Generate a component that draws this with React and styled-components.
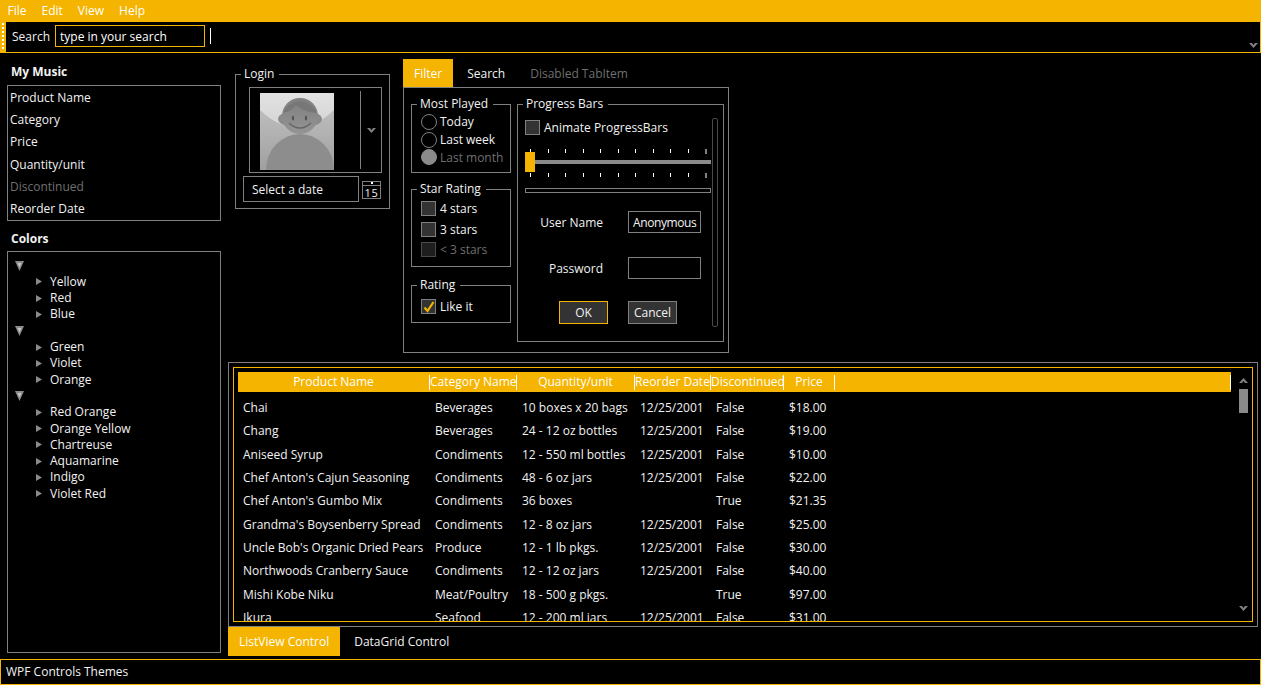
import React from 'react'
import styled, { createGlobalStyle } from 'styled-components'

const orange = '#f5b400'
const line = '#808080'
const dim = '#6f6f6f'

const GlobalStyle = createGlobalStyle`
    html, body {
        margin: 0;
        background: #000;
    }
    body {
        font-family: "Open Sans", "Noto Sans", sans-serif;
        font-size: 12px;
        color: #f2f2f2;
    }
    * {
        box-sizing: border-box;
    }
`

const Page = styled.div`
    width: 1261px;
    height: 685px;
    display: flex;
    flex-direction: column;
    overflow: hidden;
    background: #000;
`

const MenuBar = styled.div`
    height: 22px;
    flex: none;
    display: flex;
    align-items: center;
    background: ${orange};
`

const MenuItem = styled.div`
    padding: 0 7.5px;
    color: #fff;
    line-height: 20px;
`

const ToolBar = styled.div`
    height: 31px;
    flex: none;
    display: flex;
    align-items: flex-start;
    border-bottom: 1px solid ${orange};
    border-right: 1px solid ${orange};
`

const Grip = styled.div`
    width: 6px;
    height: 30px;
    flex: none;
    background: ${orange};
    position: relative;
    &::after {
        content: '';
        position: absolute;
        left: 2px;
        top: 1px;
        bottom: 1px;
        width: 2px;
        background: repeating-linear-gradient(to bottom, #fff 0 2px, transparent 2px 4px);
    }
`

const SearchLabel = styled.div`
    margin: 7px 0 0 6px;
    width: 43px;
    line-height: 16px;
`

const SearchInput = styled.div`
    width: 150px;
    height: 22px;
    margin-top: 3px;
    padding-left: 4px;
    line-height: 22px;
    border: 1px solid ${orange};
    color: #fff;
`

const ToolSep = styled.div`
    width: 1px;
    height: 16px;
    margin: 6px 0 0 5px;
    background: #fff;
`

const Overflow = styled.div`
    margin: 21px 2px 0 auto;
    display: flex;
`

const Main = styled.div`
    flex: 1;
    min-height: 0;
    display: grid;
    grid-template-columns: 214px 1030px;
    column-gap: 7px;
    padding: 0 0 0 7px;
`

const LeftCol = styled.div`
    display: flex;
    flex-direction: column;
    padding-top: 11px;
`

const SideTitle = styled.div`
    font-weight: 700;
    padding: 0 0 0 4px;
    line-height: 15px;
    height: ${p => p.$h}px;
    color: #f2f2f2;
`

const ListBox = styled.div`
    height: 136px;
    border: 1px solid ${line};
    display: grid;
    grid-template-rows: repeat(6, 1fr);
    align-items: center;
    padding-left: 2px;
    margin-bottom: 10px;
`

const ListRow = styled.div`
    color: ${p => (p.$off ? dim : '#f2f2f2')};
`

const TreeBox = styled.div`
    height: 402px;
    border: 1px solid ${line};
    padding-top: 5.4px;
`

const TreeGroupRow = styled.div`
    height: 16.3px;
    padding-left: 7px;
    display: flex;
    align-items: center;
`

const TreeLeaf = styled.div`
    height: 16.3px;
    padding-left: 28px;
    display: flex;
    align-items: center;
    gap: 8px;
    line-height: 16px;
`

const RightCol = styled.div`
    display: flex;
    flex-direction: column;
    padding-top: 6px;
`

const TopRow = styled.div`
    height: 303px;
    flex: none;
    display: flex;
    align-items: flex-start;
    gap: 13px;
    padding-left: 7px;
`

const Group = styled.fieldset`
    margin: 0;
    padding: 0;
    min-width: 0;
    width: ${p => p.$w}px;
    height: ${p => p.$h}px;
    flex: none;
    border: 1px solid ${line};
`

const Legend = styled.legend`
    margin-left: ${p => p.$lx}px;
    padding: 0 5px 0 3px;
    line-height: 16px;
    color: #f2f2f2;
`

const LoginGroup = styled(Group)`
    margin-top: 7px;
    padding: 5px 7px 0;
`

const Combo = styled.div`
    height: 86px;
    width: 133px;
    margin-left: 6px;
    border: 1px solid ${line};
    display: flex;
    align-items: center;
`

const Avatar = styled.svg`
    width: 74px;
    height: 77px;
    margin: 2px 0 0 10px;
    flex: none;
`

const ComboSep = styled.div`
    width: 1px;
    height: 78px;
    margin-left: 26px;
    background: ${line};
`

const ComboArrow = styled.div`
    flex: 1;
    display: flex;
    justify-content: center;
`

const DateRow = styled.div`
    display: flex;
    align-items: center;
    margin-top: 3px;
`

const DateBox = styled.div`
    width: 116px;
    height: 26px;
    padding-left: 8px;
    line-height: 26px;
    border: 1px solid ${line};
`

const CalendarIcon = styled.div`
    width: 19px;
    height: 18px;
    margin-left: 3px;
    margin-top: 1px;
    border: 1px solid ${line};
    font-size: 11px;
    line-height: 13px;
    letter-spacing: 0.6px;
    text-align: center;
    color: #f2f2f2;
`

const CalendarHead = styled.div`
    height: 4px;
    border-bottom: 1px solid ${line};
    display: flex;
    justify-content: center;
    align-items: center;
    &::after {
        content: '';
        width: 2px;
        height: 2px;
        background: #fff;
    }
`

const TabsBlock = styled.div`
    width: 326px;
    flex: none;
`

const TabStrip = styled.div`
    display: flex;
    gap: 3px;
`

const Tab = styled.div`
    height: ${p => p.$h}px;
    padding: 0 11px;
    display: flex;
    align-items: center;
    background: ${p => (p.$active ? orange : 'transparent')};
    color: ${p => (p.$active ? '#fff' : p.$off ? dim : '#f2f2f2')};
`

const FilterPanel = styled.div`
    height: 266px;
    border: 1px solid ${line};
    padding: 8px 4px 0 7px;
    display: flex;
    gap: 6px;
    align-items: flex-start;
`

const FilterLeft = styled.div`
    width: 100px;
    display: flex;
    flex-direction: column;
`

const StackGroup = styled(Group)`
    margin-bottom: ${p => p.$mb}px;
    padding: ${p => p.$pt}px 0 0 9px;
`

const OptionRow = styled.div`
    height: ${p => p.$h}px;
    display: flex;
    align-items: center;
    gap: ${p => p.$gap}px;
    color: ${p => (p.$off ? dim : '#f2f2f2')};
`

const Radio = styled.span`
    width: 16px;
    height: 16px;
    flex: none;
    border-radius: 50%;
    border: 1px solid ${p => (p.$off ? '#8a8a8a' : line)};
    background: ${p => (p.$off ? '#8a8a8a' : 'transparent')};
`

const Check = styled.span`
    width: 15px;
    height: 15px;
    flex: none;
    display: flex;
    align-items: center;
    justify-content: center;
    border: 1px solid ${p => (p.$off ? '#4a4a4a' : line)};
    background: ${p => (p.$off ? '#1e1e1e' : '#333')};
`

const ProgressGroup = styled(Group)`
    padding: 0 0 0 7px;
    position: relative;
`

const AnimateRow = styled.div`
    height: 16px;
    margin-top: 7px;
    display: flex;
    align-items: center;
    gap: 4px;
`

const SliderBox = styled.div`
    position: relative;
    width: 186px;
    height: 28px;
    margin-top: 14px;
`

const TickRow = styled.div`
    display: flex;
    justify-content: space-between;
    padding: 0 4px 0 5px;
    height: 4px;
    margin-bottom: 20px;
`

const Tick = styled.span`
    width: ${p => (p.$end ? 2 : 1)}px;
    height: ${p => (p.$end ? 5 : 4)}px;
    background: ${p => (p.$end ? line : '#fff')};
`

const Track = styled.div`
    position: absolute;
    left: 0;
    right: 0;
    top: 11px;
    height: 4px;
    background: #8a8a8a;
`

const Thumb = styled.div`
    position: absolute;
    left: 0;
    top: 3px;
    width: 10px;
    height: 20px;
    background: ${orange};
`

const ProgressBar = styled.div`
    width: 186px;
    height: 5px;
    margin-top: 11px;
    border: 1px solid ${line};
`

const FormGrid = styled.div`
    width: 176px;
    margin-top: 18px;
    display: grid;
    grid-template-columns: 78px 73px;
    column-gap: 25px;
    grid-auto-rows: 22px;
    row-gap: 24px;
    align-items: center;
`

const FieldLabel = styled.div`
    text-align: right;
    color: #f2f2f2;
`

const FieldBox = styled.div`
    height: 22px;
    padding-left: 4px;
    line-height: 22px;
    letter-spacing: -0.4px;
    border: 1px solid ${line};
`

const ButtonRow = styled.div`
    display: flex;
    gap: 20px;
    margin: 22px 0 0 34px;
`

const Btn = styled.div`
    width: 49px;
    height: 23px;
    line-height: 21px;
    text-align: center;
    background: #333;
    border: 1px solid ${p => (p.$focus ? orange : line)};
    color: #f2f2f2;
`

const VScrollTrack = styled.div`
    position: absolute;
    right: 5px;
    top: 6px;
    width: 6px;
    height: 209px;
    border: 1px solid #4a4a4a;
    border-radius: 2px;
`

const GridPanel = styled.div`
    width: 1030px;
    height: 265px;
    flex: none;
    border: 1px solid ${line};
    padding: 4px;
`

const GridInner = styled.div`
    height: 100%;
    border: 1px solid ${orange};
    padding: 4px 0 0 4px;
    display: flex;
    overflow: hidden;
`

const TableWrap = styled.div`
    width: 993px;
    flex: none;
`

const COLUMNS = '192px 87px 118px 76px 73px 51px 1fr'

const HeadRow = styled.div`
    height: 20px;
    display: grid;
    grid-template-columns: ${COLUMNS};
    align-items: center;
    background: ${orange};
    margin-bottom: 3.8px;
`

const HeadCell = styled.div`
    height: 15px;
    line-height: 14px;
    text-align: center;
    color: #fff;
    white-space: nowrap;
    border-right: 1px solid #fff;
`

const DataRow = styled.div`
    height: 23.35px;
    display: grid;
    grid-template-columns: ${COLUMNS};
    align-items: center;
`

const DataCell = styled.div`
    padding-left: 5px;
    white-space: nowrap;
    color: #f2f2f2;
`

const GridScroll = styled.div`
    width: 10px;
    margin-left: 7px;
    display: flex;
    flex-direction: column;
    align-items: center;
`

const ScrollArrow = styled.div`
    height: 5px;
    margin-top: ${p => p.$top}px;
    display: flex;
`

const ScrollThumb = styled.div`
    width: 9px;
    height: 24px;
    margin-top: 6px;
    background: #8a8a8a;
`

const BottomTabs = styled(TabStrip)`
    width: 1030px;
`

const StatusBar = styled.div`
    height: 26px;
    flex: none;
    margin-top: 0;
    padding-left: 5px;
    line-height: 24px;
    border: 1px solid ${orange};
    color: #f2f2f2;
`

const Chevron = ({ w = 9, h = 5, down = true, color = line }) => (
    <svg width={w} height={h} viewBox="0 0 9 5">
        <path d={down ? 'M0 0 H3 L4.5 2 L6 0 H9 L4.5 5 Z' : 'M0 5 H3 L4.5 3 L6 5 H9 L4.5 0 Z'} fill={color} />
    </svg>
)

const GroupArrow = () => (
    <svg width="9" height="10" viewBox="0 0 9 10">
        <path d="M0 0 H9 L4.5 10 Z" fill="#8a8a8a" />
        <path d="M2.5 2 H6.5 L4.5 6.5 Z" fill="#c4c4c4" />
    </svg>
)

const LeafArrow = () => (
    <svg width="6" height="7" viewBox="0 0 6 7">
        <path d="M0 0 L6 3.5 L0 7 Z" fill="#8a8a8a" />
    </svg>
)

const CheckMark = () => (
    <svg width="12" height="12" viewBox="0 0 12 12">
        <path d="M1.5 6.5 L4.5 10 L10.5 1" fill="none" stroke={orange} strokeWidth="2.2" />
    </svg>
)

const AvatarImage = () => (
    <Avatar viewBox="0 0 74 77">
        <defs>
            <linearGradient id="bgTop" x1="0" y1="0" x2="0" y2="1">
                <stop offset="0" stopColor="#e2e2e2" />
                <stop offset="1" stopColor="#c4c4c4" />
            </linearGradient>
            <linearGradient id="bgLow" x1="0" y1="0" x2="0" y2="1">
                <stop offset="0" stopColor="#bdbdbd" />
                <stop offset="1" stopColor="#a0a0a0" />
            </linearGradient>
            <linearGradient id="skin" x1="0" y1="0" x2="0" y2="1">
                <stop offset="0" stopColor="#7e7e7e" />
                <stop offset="1" stopColor="#959595" />
            </linearGradient>
        </defs>
        <rect width="74" height="77" fill="url(#bgTop)" />
        <path d="M0 17 Q37 52 74 17 V77 H0 Z" fill="url(#bgLow)" />
        <ellipse cx="40" cy="77" rx="34" ry="36" fill="#8d8d8d" />
        <ellipse cx="40" cy="26" rx="22" ry="9" fill="#8a8a8a" />
        <circle cx="40" cy="23" r="18" fill="url(#skin)" />
        <path d="M23 20 A18 17 0 0 1 57 20 Q44 19 36 12 Q32 18 23 20 Z" fill="#777" />
        <ellipse cx="33" cy="25" rx="1.2" ry="2.5" fill="#555" />
        <ellipse cx="46" cy="25" rx="1.2" ry="2.5" fill="#555" />
        <path d="M29 30 Q40 40 51 30" fill="none" stroke="#666" strokeWidth="1.4" />
    </Avatar>
)

const products = [
    ['Chai', 'Beverages', '10 boxes x 20 bags', '12/25/2001', 'False', '$18.00'],
    ['Chang', 'Beverages', '24 - 12 oz bottles', '12/25/2001', 'False', '$19.00'],
    ['Aniseed Syrup', 'Condiments', '12 - 550 ml bottles', '12/25/2001', 'False', '$10.00'],
    ["Chef Anton's Cajun Seasoning", 'Condiments', '48 - 6 oz jars', '12/25/2001', 'False', '$22.00'],
    ["Chef Anton's Gumbo Mix", 'Condiments', '36 boxes', '', 'True', '$21.35'],
    ["Grandma's Boysenberry Spread", 'Condiments', '12 - 8 oz jars', '12/25/2001', 'False', '$25.00'],
    ["Uncle Bob's Organic Dried Pears", 'Produce', '12 - 1 lb pkgs.', '12/25/2001', 'False', '$30.00'],
    ['Northwoods Cranberry Sauce', 'Condiments', '12 - 12 oz jars', '12/25/2001', 'False', '$40.00'],
    ['Mishi Kobe Niku', 'Meat/Poultry', '18 - 500 g pkgs.', '', 'True', '$97.00'],
    ['Ikura', 'Seafood', '12 - 200 ml jars', '12/25/2001', 'False', '$31.00'],
]

const headers = ['Product Name', 'Category Name', 'Quantity/unit', 'Reorder Date', 'Discontinued', 'Price', '']

const colorGroups = [
    ['Yellow', 'Red', 'Blue'],
    ['Green', 'Violet', 'Orange'],
    ['Red Orange', 'Orange Yellow', 'Chartreuse', 'Aquamarine', 'Indigo', 'Violet Red'],
]

const Ticks = () => (
    <TickRow>
        {Array.from({ length: 11 }, (_, i) => <Tick key={i} $end={i === 10} />)}
    </TickRow>
)

const App = () => (
    <Page>
        <GlobalStyle />
        <MenuBar>
            <MenuItem>File</MenuItem>
            <MenuItem>Edit</MenuItem>
            <MenuItem>View</MenuItem>
            <MenuItem>Help</MenuItem>
        </MenuBar>
        <ToolBar>
            <Grip />
            <SearchLabel>Search</SearchLabel>
            <SearchInput>type in your search</SearchInput>
            <ToolSep />
            <Overflow><Chevron /></Overflow>
        </ToolBar>
        <Main>
            <LeftCol>
                <SideTitle $h={21}>My Music</SideTitle>
                <ListBox>
                    <ListRow>Product Name</ListRow>
                    <ListRow>Category</ListRow>
                    <ListRow>Price</ListRow>
                    <ListRow>Quantity/unit</ListRow>
                    <ListRow $off>Discontinued</ListRow>
                    <ListRow>Reorder Date</ListRow>
                </ListBox>
                <SideTitle $h={20}>Colors</SideTitle>
                <TreeBox>
                    {colorGroups.map((items, i) => (
                        <div key={i}>
                            <TreeGroupRow><GroupArrow /></TreeGroupRow>
                            {items.map(c => (
                                <TreeLeaf key={c}><LeafArrow />{c}</TreeLeaf>
                            ))}
                        </div>
                    ))}
                </TreeBox>
            </LeftCol>
            <RightCol>
                <TopRow>
                    <LoginGroup $w={155} $h={143}>
                        <Legend $lx={-2}>Login</Legend>
                        <Combo>
                            <AvatarImage />
                            <ComboSep />
                            <ComboArrow><Chevron w={9} h={5} /></ComboArrow>
                        </Combo>
                        <DateRow>
                            <DateBox>Select a date</DateBox>
                            <CalendarIcon><CalendarHead />15</CalendarIcon>
                        </DateRow>
                    </LoginGroup>
                    <TabsBlock>
                        <TabStrip>
                            <Tab $h={28} $active>Filter</Tab>
                            <Tab $h={28}>Search</Tab>
                            <Tab $h={28} $off>Disabled TabItem</Tab>
                        </TabStrip>
                        <FilterPanel>
                            <FilterLeft>
                                <StackGroup $w={100} $h={77} $mb={8} $pt={1}>
                                    <Legend $lx={-4}>Most Played</Legend>
                                    <OptionRow $h={17.8} $gap={3}><Radio />Today</OptionRow>
                                    <OptionRow $h={17.8} $gap={3}><Radio />Last week</OptionRow>
                                    <OptionRow $h={17.8} $gap={3} $off><Radio $off />Last month</OptionRow>
                                </StackGroup>
                                <StackGroup $w={100} $h={86} $mb={10} $pt={1.5}>
                                    <Legend $lx={-4}>Star Rating</Legend>
                                    <OptionRow $h={20.5} $gap={4}><Check />4 stars</OptionRow>
                                    <OptionRow $h={20.5} $gap={4}><Check />3 stars</OptionRow>
                                    <OptionRow $h={20.5} $gap={4} $off><Check $off />&lt; 3 stars</OptionRow>
                                </StackGroup>
                                <StackGroup $w={100} $h={46} $mb={0} $pt={3}>
                                    <Legend $lx={-4}>Rating</Legend>
                                    <OptionRow $h={21} $gap={4}><Check><CheckMark /></Check>Like it</OptionRow>
                                </StackGroup>
                            </FilterLeft>
                            <ProgressGroup $w={207} $h={246}>
                                <Legend $lx={-2}>Progress Bars</Legend>
                                <AnimateRow><Check />Animate ProgressBars</AnimateRow>
                                <SliderBox>
                                    <Ticks />
                                    <Ticks />
                                    <Track />
                                    <Thumb />
                                </SliderBox>
                                <ProgressBar />
                                <FormGrid>
                                    <FieldLabel>User Name</FieldLabel>
                                    <FieldBox>Anonymous</FieldBox>
                                    <FieldLabel>Password</FieldLabel>
                                    <FieldBox />
                                </FormGrid>
                                <ButtonRow>
                                    <Btn $focus>OK</Btn>
                                    <Btn>Cancel</Btn>
                                </ButtonRow>
                                <VScrollTrack />
                            </ProgressGroup>
                        </FilterPanel>
                    </TabsBlock>
                </TopRow>
                <GridPanel>
                    <GridInner>
                        <TableWrap>
                            <HeadRow>
                                {headers.map((h, i) => <HeadCell key={i}>{h}</HeadCell>)}
                            </HeadRow>
                            {products.map(row => (
                                <DataRow key={row[0]}>
                                    {row.map((cell, i) => <DataCell key={i}>{cell}</DataCell>)}
                                </DataRow>
                            ))}
                        </TableWrap>
                        <GridScroll>
                            <ScrollArrow $top={6}><Chevron down={false} /></ScrollArrow>
                            <ScrollThumb />
                            <ScrollArrow $top={193}><Chevron /></ScrollArrow>
                        </GridScroll>
                    </GridInner>
                </GridPanel>
                <BottomTabs>
                    <Tab $h={29} $active>ListView Control</Tab>
                    <Tab $h={29}>DataGrid Control</Tab>
                </BottomTabs>
            </RightCol>
        </Main>
        <StatusBar>WPF Controls Themes</StatusBar>
    </Page>
)

export default App
